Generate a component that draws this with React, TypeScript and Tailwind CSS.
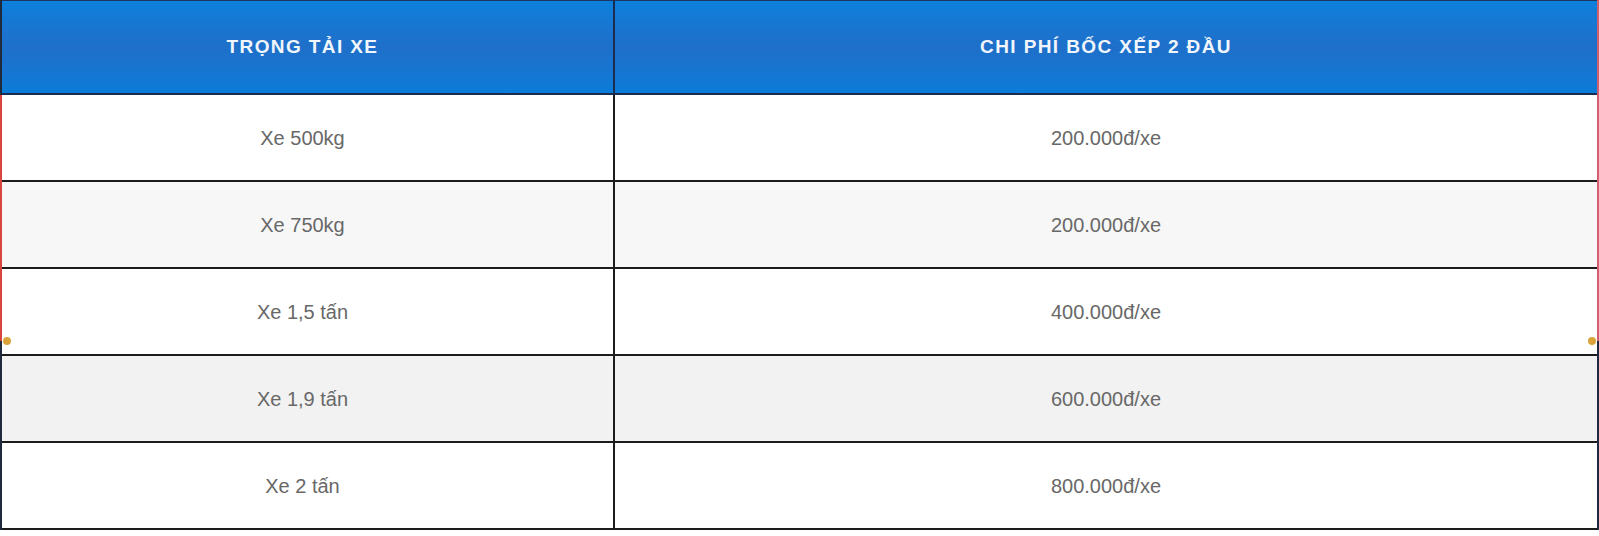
import React from 'react';

interface Row {
  load: string;
  price: string;
}

const rows: Row[] = [
  { load: 'Xe 500kg', price: '200.000đ/xe' },
  { load: 'Xe 750kg', price: '200.000đ/xe' },
  { load: 'Xe 1,5 tấn', price: '400.000đ/xe' },
  { load: 'Xe 1,9 tấn', price: '600.000đ/xe' },
  { load: 'Xe 2 tấn', price: '800.000đ/xe' },
];

const rowBg = ['bg-white', 'bg-[#f7f7f7]', 'bg-white', 'bg-[#f2f2f2]', 'bg-white'];

const App: React.FC = () => {
  return (
    <div className="relative w-full h-[536px] bg-white font-['Liberation_Sans',Arial,sans-serif]">
      <div className="w-full border-x-2 border-[#1f2a3c]">
        {/* header */}
        <div className="grid grid-cols-[613px_1fr] h-[95px] border-t border-[#1b3560] border-b-2 border-b-[#1a2c4f] bg-linear-to-b from-[#0b80dc] via-[#1e6fc9] to-[#0a7cd9]">
          <div className="flex items-center justify-center pr-[10px] border-r-2 border-[#1a2c4f] text-[19px] font-bold tracking-[1.4px] text-[#f1f6fc]">
            TRỌNG TẢI XE
          </div>
          <div className="flex items-center justify-center text-[19px] font-bold tracking-[1.4px] text-[#f1f6fc]">
            CHI PHÍ BỐC XẾP 2 ĐẦU
          </div>
        </div>

        {/* body */}
        {rows.map((row, i) => (
          <div key={i} className={`grid grid-cols-[613px_1fr] h-[87px] border-b-2 border-[#1c1c1c] ${rowBg[i]}`}>
            <div className="flex items-center justify-center pr-[10px] border-r-2 border-[#1c1c1c] text-[20px] text-[#686868]">
              {row.load}
            </div>
            <div className="flex items-center justify-center text-[20px] text-[#686868]">
              {row.price}
            </div>
          </div>
        ))}
      </div>

      {/* selection marks */}
      <div className="absolute left-0 top-[95px] h-[246px] w-[2px] bg-[#d8453c]" />
      <div className="absolute left-[3px] top-[337px] h-[8px] w-[8px] rounded-full bg-[#d9a43a]" />
      <div className="absolute right-0 top-0 h-[341px] w-[2px] bg-[#d06070]" />
      <div className="absolute right-[3px] top-[337px] h-[8px] w-[8px] rounded-full bg-[#d9a43a]" />
    </div>
  );
};

export default App;
